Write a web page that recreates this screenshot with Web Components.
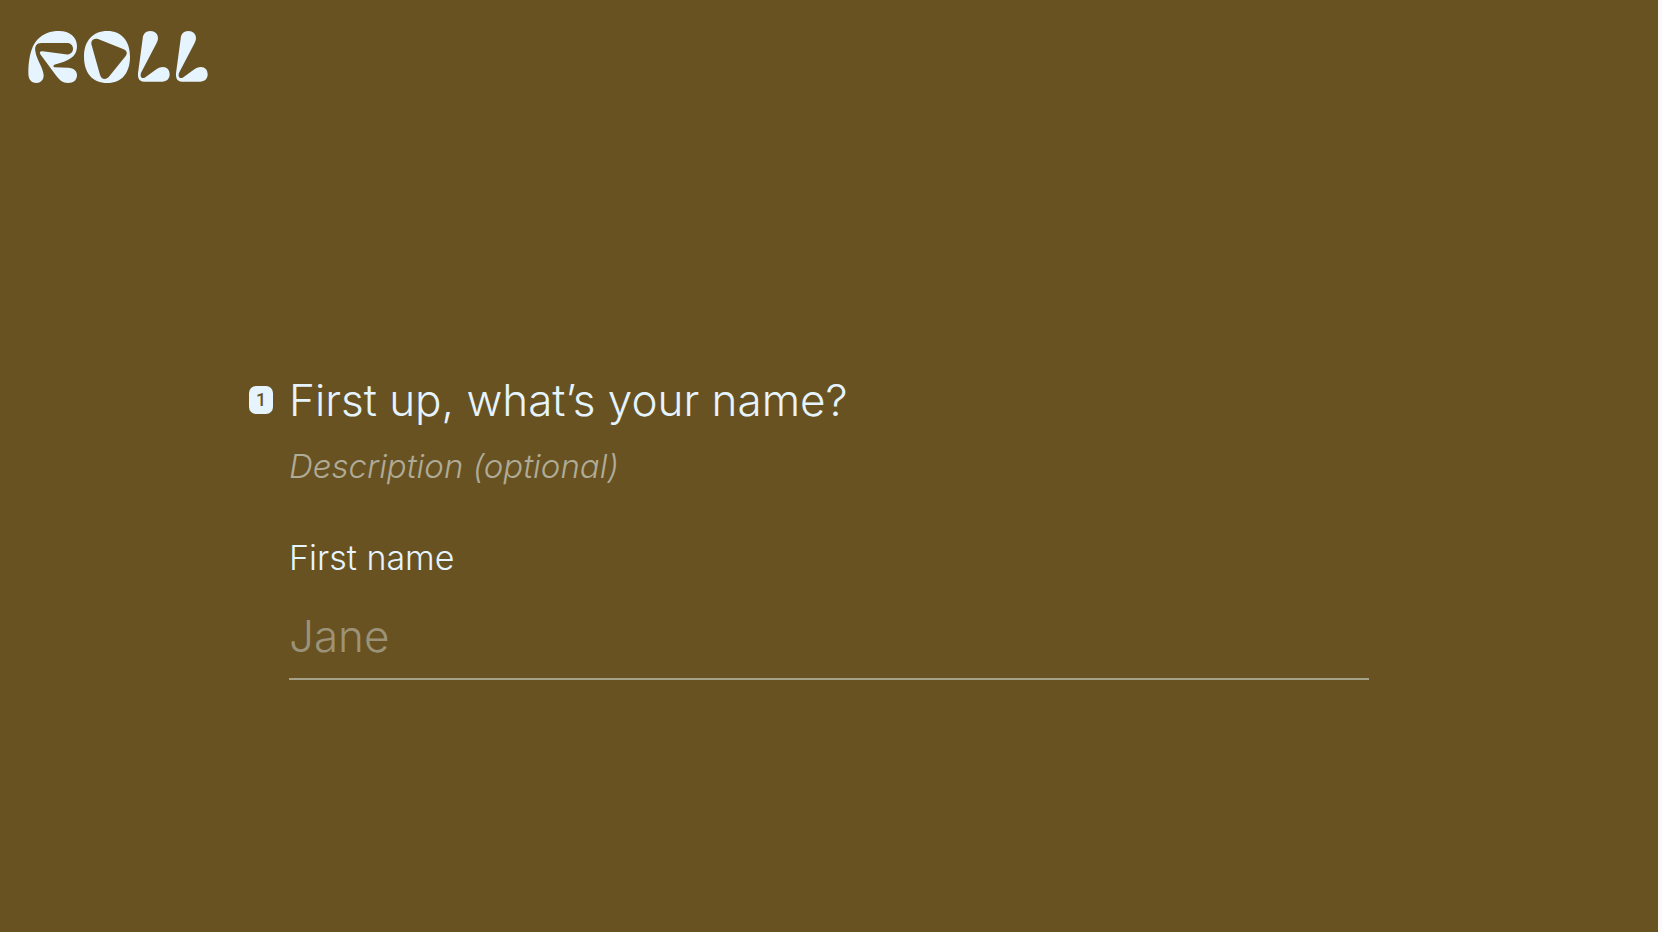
<!DOCTYPE html>
<html lang="en">
<head>
  <meta charset="UTF-8">
  <meta name="viewport" content="width=device-width, initial-scale=1.0">
  <title>Roll</title>
  <style>
    body {
      margin: 0;
      background: #fafafa;
      color: #e5f4ff;
      font-family: Inter, "Open Sans", sans-serif;
      font-weight: 300;
    }
  </style>
</head>
<body>
  <form-screen>
    <roll-logo slot="logo"></roll-logo>
    <form-question number="1">
      <span slot="title">First up, what’s your name?</span>
      <span slot="description">Description (optional)</span>
      <text-field label="First name" placeholder="Jane"></text-field>
    </form-question>
  </form-screen>

  <script>
    class FormScreen extends HTMLElement {
      constructor() {
        super();
        this.attachShadow({ mode: 'open' });
        this.shadowRoot.innerHTML = `
          <style>
            :host {
              display: flex;
              flex-direction: column;
              min-height: 100vh;
              margin-right: 4px;
              background: #685221;
            }

            header {
              padding: 31px 28px 34px;
            }

            main {
              flex: 1;
              display: flex;
              flex-direction: column;
              justify-content: center;
            }
          </style>
          <header><slot name="logo"></slot></header>
          <main><slot></slot></main>
        `;
      }
    }

    class RollLogo extends HTMLElement {
      constructor() {
        super();
        this.attachShadow({ mode: 'open' });
        this.shadowRoot.innerHTML = `
          <style>
            :host {
              display: block;
              width: 180px;
            }

            svg {
              display: block;
              width: 100%;
              fill: currentColor;
            }
          </style>
          <svg viewBox="24 33 540 156" role="img" aria-label="Roll">
            <path d="M49 189C33 189 25 178 25 159C25 119 32 82 51 60C70 40 92 33 117 33C150 33 171 51 171 79C171 105 154 117 132 125L103 134Q97 139 104 142L145 143C161 144 171 152 171 165C171 180 161 189 144 189C128 189 118 180 107 165L62 104C57 97 60 93 68 94L136 103C151 105 159 97 159 86C159 75 151 69 139 69H65C49 69 44 79 46 93C49 118 70 144 71 166C71 180 62 189 49 189Z"/>
            <path fill-rule="evenodd" d="M262 33C305 33 330 63 330 110C330 159 305 189 262 189C218 189 192 159 192 110C192 63 218 33 262 33ZM234 57C221 53 211 62 215 76L240 164C244 179 258 181 268 169L317 108C323 100 321 93 311 88Z"/>
            <path id="stem" d="M368 56C369 42 377 33 391 33C405 33 414 42 414 54C414 63 409 71 404 80L364 157C359 168 363 178 374 173L405 151C414 144 421 141 429 141C441 141 449 150 449 163C449 177 440 185 426 185H372C358 185 353 176 354 160Z"/>
            <use href="#stem" x="114"/>
          </svg>
        `;
      }
    }

    class FormQuestion extends HTMLElement {
      constructor() {
        super();
        this.attachShadow({ mode: 'open' });
        this.shadowRoot.innerHTML = `
          <style>
            :host {
              display: grid;
              grid-template-columns: 24px minmax(0, 1fr) 24px;
              column-gap: 16px;
              box-sizing: border-box;
              width: 100%;
              max-width: 1160px;
              margin: 0 auto;
            }

            .number {
              display: flex;
              align-items: center;
              justify-content: center;
              height: 28px;
              margin-top: 16px;
              border-radius: 7px;
              background: #e5f4ff;
              color: #685221;
              font: 500 18px/20px Roboto, sans-serif;
            }

            h1 {
              margin: 0;
              font-size: 44px;
              font-weight: inherit;
              line-height: 60px;
            }

            p {
              margin: 12px 0 44px;
              font-size: 33px;
              font-style: italic;
              line-height: 48px;
              color: #afab97;
            }
          </style>
          <div class="number"></div>
          <div>
            <h1><slot name="title"></slot></h1>
            <p><slot name="description"></slot></p>
            <slot></slot>
          </div>
        `;
      }

      connectedCallback() {
        this.shadowRoot.querySelector('.number').textContent = this.getAttribute('number');
      }
    }

    class TextField extends HTMLElement {
      constructor() {
        super();
        this.attachShadow({ mode: 'open' });
        this.shadowRoot.innerHTML = `
          <style>
            :host {
              display: block;
            }

            label {
              display: block;
              margin-bottom: 20px;
              font-size: 34px;
              line-height: 48px;
            }

            input {
              display: block;
              box-sizing: border-box;
              width: 100%;
              height: 78px;
              padding: 0 0 8px;
              border: 0;
              border-bottom: 2px solid #a6a189;
              border-radius: 0;
              outline: 0;
              background: none;
              color: inherit;
              font: inherit;
              font-size: 44px;
            }

            input::placeholder {
              color: #9c9278;
              opacity: 1;
            }
          </style>
          <label for="field"></label>
          <input id="field" type="text">
        `;
      }

      connectedCallback() {
        this.shadowRoot.querySelector('label').textContent = this.getAttribute('label');
        this.shadowRoot.querySelector('input').placeholder = this.getAttribute('placeholder');
      }
    }

    customElements.define('form-screen', FormScreen);
    customElements.define('roll-logo', RollLogo);
    customElements.define('form-question', FormQuestion);
    customElements.define('text-field', TextField);
  </script>
</body>
</html>
